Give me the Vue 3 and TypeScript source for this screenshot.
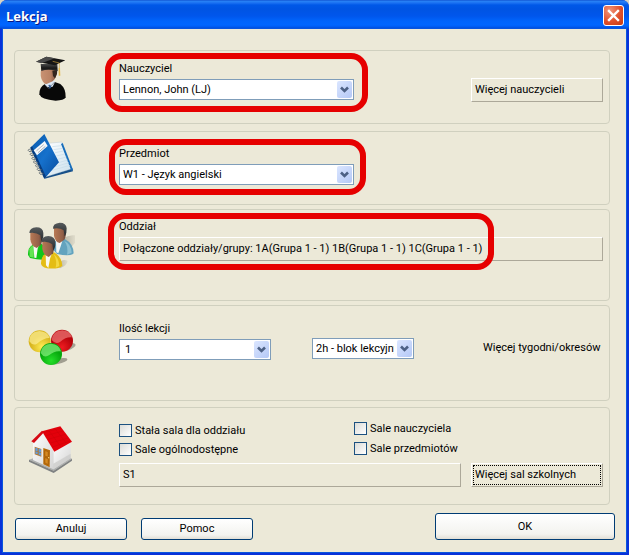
<script setup lang="ts">
import { ref } from 'vue'

const teacher = ref('Lennon, John (LJ)')
const subject = ref('W1 - Język angielski')
const count = ref('1')
const block = ref('2h - blok lekcyjny')

const leftRooms = ref([
  { id: 'room-fixed', text: 'Stała sala dla oddziału', on: false },
  { id: 'room-public', text: 'Sale ogólnodostępne', on: false },
])
const rightRooms = ref([
  { id: 'room-teacher', text: 'Sale nauczyciela', on: false },
  { id: 'room-subject', text: 'Sale przedmiotów', on: false },
])
</script>

<template>
  <main class="window">
    <header class="titlebar">
      <h1>Lekcja</h1>
      <button class="close" type="button" aria-label="Zamknij">
        <svg viewBox="0 0 21 21" width="21" height="21">
          <path d="M6 6l9 9M15 6l-9 9" stroke="#fff" stroke-width="2.4" stroke-linecap="square" />
        </svg>
      </button>
    </header>

    <form class="content" @submit.prevent>
      <section class="group teacher">
        <svg class="icon" viewBox="0 3 210 180" aria-hidden="true">
          <defs>
            <linearGradient id="cap" x1="0" y1="0" x2="0" y2="1">
              <stop offset="0" stop-color="#4a4a4a" /><stop offset=".6" stop-color="#181818" /><stop offset="1" stop-color="#333" />
            </linearGradient>
            <linearGradient id="face" x1="0" y1="0" x2="1" y2="0">
              <stop offset="0" stop-color="#c99373" /><stop offset=".6" stop-color="#b98264" /><stop offset="1" stop-color="#7c5340" />
            </linearGradient>
          </defs>
          <path d="M58 133Q58 110 75 102L98 94L121 102Q138 116 137 142Q132 152 107 152Q63 149 58 133Z" fill="#080808" />
          <path d="M74 103L82 112L98 110L106 94L94 92Z" fill="#dce8f5" />
          <path d="M75 105L86 115L104 96" fill="none" stroke="#59616b" stroke-width="2" />
          <path d="M85 105l6-1 3 8-5 5z" fill="#395e92" />
          <path d="M64 54Q58 82 69 95Q74 103 80 102L98 94Q111 85 111 58Z" fill="url(#face)" />
          <path d="M97 62L112 59Q113 74 105 85L99 78Z" fill="#33261f" />
          <path d="M62 42L112 42L113 63Q84 55 64 63Z" fill="url(#cap)" />
          <path d="M48 35L79 20L136 31L105 46Z" fill="#151515" />
          <path d="M48 35L79 20L105 25L64 40Z" fill="#4b4b4b" />
          <path d="M98 34L118 39L118 68" fill="none" stroke="#c69a3b" stroke-width="2" />
          <path d="M116 54h4l1 23h-5z" fill="#e5b94e" />
        </svg>
        <div class="main">
          <div class="field wide">
            <label for="teacher">Nauczyciel</label>
            <div class="combo">
              <select id="teacher" v-model="teacher"><option>Lennon, John (LJ)</option></select>
              <span class="arrow"><svg viewBox="0 0 15 17"><path d="M4 6.5l3.5 3.5L11 6.5" /></svg></span>
            </div>
            <span class="mark" />
          </div>
        </div>
        <button class="flat more" type="button">Więcej nauczycieli</button>
      </section>

      <section class="group subject">
        <svg class="icon" viewBox="0 6 210 180" aria-hidden="true">
          <defs>
            <linearGradient id="cover" x1="0" y1="0" x2="1" y2="1">
              <stop offset="0" stop-color="#0959aa" /><stop offset=".5" stop-color="#1671cc" /><stop offset="1" stop-color="#074b9c" />
            </linearGradient>
            <linearGradient id="pages" x1="0" y1="0" x2="1" y2="1">
              <stop offset="0" stop-color="#fff" /><stop offset="1" stop-color="#c9dfec" />
            </linearGradient>
          </defs>
          <path d="M74 146L159 124L157 115L85 120Z" fill="#174f88" />
          <path d="M84 40L126 36L156 116L76 141L100 98Z" fill="url(#pages)" stroke="#a3b9c5" />
          <path d="M128 39L159 119L154 122L123 42Z" fill="#176dbb" />
          <path d="M97 50l27-3M101 59l27-4M105 68l26-5M109 78l26-6M113 88l26-7M115 98l28-8M106 110l41-12M96 121l54-15" stroke="#c6dce8" stroke-width="2" />
          <path d="M31 53L73 12L117 97L73 146Z" fill="url(#cover)" />
          <path d="M31 53L36 49L78 140L73 146Z" fill="#083c7e" />
          <path d="M41 61L74 33L83 48L51 76Z" fill="#f6f8fa" />
          <path d="M50 62L71 44M54 68L76 49" stroke="#8c99a7" stroke-width="3" stroke-dasharray="3 1" />
          <g fill="none" stroke="#6d767b" stroke-width="3">
            <path d="M35 63c-5-8-12-5-10-1s8 4 12 0M41 75c-5-8-12-5-10-1s8 4 12 0M46 87c-5-8-12-5-10-1s8 4 12 0M51 98c-5-8-12-5-10-1s8 4 12 0M57 109c-5-8-12-5-10-1s8 4 12 0M62 120c-5-8-12-5-10-1s8 4 12 0M68 131c-5-8-12-5-10-1s8 4 12 0" />
          </g>
        </svg>
        <div class="main">
          <div class="field wide">
            <label for="subject">Przedmiot</label>
            <div class="combo">
              <select id="subject" v-model="subject"><option>W1 - Język angielski</option></select>
              <span class="arrow"><svg viewBox="0 0 15 17"><path d="M4 6.5l3.5 3.5L11 6.5" /></svg></span>
            </div>
            <span class="mark" />
          </div>
        </div>
      </section>

      <section class="group classes">
        <svg class="icon" viewBox="0 0 210 180" aria-hidden="true">
          <defs>
            <linearGradient id="skin" x1="0" y1="0" x2="1" y2="0">
              <stop offset="0" stop-color="#b87955" /><stop offset=".7" stop-color="#936048" /><stop offset="1" stop-color="#644336" />
            </linearGradient>
            <linearGradient id="hair" x1="0" y1="0" x2="0" y2="1">
              <stop offset="0" stop-color="#575b5d" /><stop offset="1" stop-color="#24282b" />
            </linearGradient>
            <linearGradient id="shade"><stop offset="0" stop-color="#8f8c7e" /><stop offset="1" stop-color="#d8d4c3" /></linearGradient>
          </defs>
          <path d="M128 62Q146 49 165 52L165 74L145 99Z" fill="url(#shade)" opacity=".6" />
          <path d="M112 143Q127 118 143 129Q141 143 120 151Z" fill="url(#shade)" opacity=".6" />
          <path d="M98 93Q98 73 110 67L134 63Q160 76 161 106Q151 117 111 108Z" fill="#63a3be" />
          <path d="M133 69Q153 77 155 104L141 110Q146 86 133 69Z" fill="#8bc0d2" />
          <path d="M108 69L128 65L122 85L115 106L109 103Z" fill="#f5f8f8" />
          <path d="M102 29L137 29Q140 53 133 65L119 75Q105 71 102 53Z" fill="url(#skin)" />
          <path d="M99 32Q98 16 119 14Q139 14 140 31Q141 46 134 55L131 37Q118 28 99 32Z" fill="url(#hair)" />
          <path d="M24 111Q23 89 38 80L64 77Q86 90 88 121Q71 130 30 120Z" fill="#12c51a" />
          <path d="M28 94Q34 82 42 80L41 119L29 116Z" fill="#64e453" />
          <path d="M40 80L58 79L53 92L49 120L43 119Z" fill="#f7f8f2" />
          <path d="M31 43L66 43Q69 66 63 80L50 90Q33 85 31 64Z" fill="url(#skin)" />
          <path d="M28 45Q28 30 49 28Q69 28 70 45Q71 61 64 70L61 52Q48 42 28 45Z" fill="url(#hair)" />
          <path d="M63 136Q64 114 76 108L102 103Q126 116 127 144Q116 154 81 151Q63 147 63 136Z" fill="#e4bd15" />
          <path d="M101 108Q117 120 118 144L107 149Q112 127 101 108Z" fill="#f3d942" />
          <path d="M77 108L96 105L90 122L85 150L78 142Z" fill="#faf9ef" />
          <path d="M67 70L102 70Q104 93 99 106L86 117Q70 112 67 92Z" fill="url(#skin)" />
          <path d="M64 72Q64 56 85 54Q105 55 106 72Q107 89 100 97L97 79Q85 68 64 72Z" fill="url(#hair)" />
        </svg>
        <div class="main">
          <div class="field">
            <label for="classes">Oddział</label>
            <button id="classes" class="flat" type="button">Połączone oddziały/grupy: 1A(Grupa 1 - 1) 1B(Grupa 1 - 1) 1C(Grupa 1 - 1)</button>
            <span class="mark" />
          </div>
        </div>
      </section>

      <section class="group lessons">
        <svg class="icon" viewBox="0 0 210 180" aria-hidden="true">
          <defs>
            <radialGradient id="yellow" cx=".6" cy=".75"><stop offset="0" stop-color="#ffec55" /><stop offset="1" stop-color="#d8b51d" /></radialGradient>
            <radialGradient id="red" cx=".5" cy=".8"><stop offset="0" stop-color="#ef1c20" /><stop offset="1" stop-color="#b7040b" /></radialGradient>
            <radialGradient id="green" cx=".5" cy=".8"><stop offset="0" stop-color="#25df29" /><stop offset="1" stop-color="#07a70d" /></radialGradient>
          </defs>
          <ellipse cx="140" cy="88" rx="28" ry="10" fill="#a6a394" transform="rotate(-18 140 88)" />
          <ellipse cx="112" cy="130" rx="31" ry="8" fill="#a19e90" transform="rotate(-12 112 130)" />
          <circle cx="59" cy="70" r="33" fill="url(#yellow)" />
          <path d="M28 70Q27 42 58 39Q83 41 89 60Q69 60 51 77Q38 85 28 70Z" fill="#fff3a0" opacity=".65" />
          <circle cx="126" cy="68" r="33" fill="url(#red)" />
          <path d="M95 66Q98 39 127 37Q151 39 156 58Q138 56 121 71Q107 81 95 66Z" fill="#f68d8b" opacity=".6" />
          <circle cx="93" cy="108" r="33" fill="url(#green)" />
          <path d="M62 105Q65 79 93 77Q118 79 123 100Q104 97 88 111Q73 122 62 105Z" fill="#93f58b" opacity=".65" />
        </svg>
        <div class="main lesson-row">
          <div class="field count">
            <label for="count">Ilość lekcji</label>
            <div class="combo">
              <select id="count" v-model="count"><option>1</option></select>
              <span class="arrow"><svg viewBox="0 0 15 17"><path d="M4 6.5l3.5 3.5L11 6.5" /></svg></span>
            </div>
          </div>
          <div class="combo block">
            <select v-model="block" aria-label="Blok"><option>2h - blok lekcyjny</option></select>
            <span class="arrow"><svg viewBox="0 0 15 17"><path d="M4 6.5l3.5 3.5L11 6.5" /></svg></span>
          </div>
        </div>
        <button class="plain" type="button">Więcej tygodni/okresów</button>
      </section>

      <section class="group rooms">
        <svg class="icon" viewBox="0 0 210 180" aria-hidden="true">
          <defs>
            <linearGradient id="wall" x1="0" y1="0" x2="1" y2="1"><stop offset="0" stop-color="#fff" /><stop offset="1" stop-color="#d4d4d4" /></linearGradient>
          </defs>
          <path d="M27 125L99 99L156 122L101 158Z" fill="#aeb0b0" />
          <path d="M27 125L101 158L156 122L156 128L101 165L27 131Z" fill="#7f8283" />
          <path d="M39 70L66 43L101 96L100 154L39 126Z" fill="url(#wall)" />
          <path d="M100 96L152 65L152 121L100 154Z" fill="url(#wall)" />
          <path d="M100 137L152 107L152 121L100 154Z" fill="#c9c9c8" opacity=".7" />
          <path d="M66 40L121 25L156 71L103 101Z" fill="#e3000b" />
          <path d="M66 38L72 43L42 75L34 70Z" fill="#d60913" />
          <path d="M71 43L122 31M77 53L129 39M84 64L137 49M91 75L145 60M97 87L151 69M86 37L121 84M105 32L139 76" stroke="#c20007" stroke-width="1" />
          <path d="M44 86L64 93L64 116L44 109Z" fill="#b57529" />
          <path d="M46 89l7 2v9l-7-2zM56 92l7 2v9l-7-2zM46 100l7 2v7l-7-2zM56 103l7 2v8l-7-2z" fill="#629ddb" />
          <path d="M70 90L90 97L89 148L70 139Z" fill="#b76a08" />
          <path d="M75 98l9 3v16l-9-3zM75 119l9 3v17l-9-4z" fill="#d78a1f" stroke="#8b4b08" />
          <circle cx="86" cy="119" r="2" fill="#ffe07b" />
        </svg>
        <div class="main">
          <div class="checks">
            <div class="check-col left">
              <label v-for="room in leftRooms" :key="room.id" :for="room.id">
                <input :id="room.id" v-model="room.on" type="checkbox" />{{ room.text }}
              </label>
            </div>
            <div class="check-col right">
              <label v-for="room in rightRooms" :key="room.id" :for="room.id">
                <input :id="room.id" v-model="room.on" type="checkbox" />{{ room.text }}
              </label>
            </div>
          </div>
          <div class="room-row">
            <button class="flat" type="button">S1</button>
            <button class="flat focused" type="button">Więcej sal szkolnych</button>
          </div>
        </div>
      </section>

      <footer class="actions">
        <button class="push" type="button">Anuluj</button>
        <button class="push" type="button">Pomoc</button>
        <button class="push ok" type="submit">OK</button>
      </footer>
    </form>
  </main>
</template>

<style>
body {
  background: #d6d3c4;
}
</style>

<style scoped>
* {
  box-sizing: border-box;
}
.window {
  min-height: 100vh;
  display: flex;
  flex-direction: column;
  border-radius: 7px 7px 0 0;
  overflow: hidden;
  background: #0831d9;
  font-family: Roboto, 'DejaVu Sans Condensed', sans-serif;
  font-size: 11px;
  line-height: 16px;
  color: #000;
}
button,
select {
  font: inherit;
  color: inherit;
}
.titlebar {
  height: 29px;
  padding: 2px 5px 0 6px;
  display: flex;
  align-items: center;
  justify-content: space-between;
  background: linear-gradient(#0a46c8 0, #2a84f6 1px, #1a70f2 3px, #0058e8 5px, #0054e3 9px, #0056ec 16px, #0064fb 21px, #0066ff 25px, #005af0 27px, #0043c8 29px);
}
h1 {
  margin: 0;
  font: bold 13px/20px 'Open Sans', sans-serif;
  color: #fff;
  text-shadow: 1px 1px 0 #0a1883;
}
.close {
  width: 21px;
  height: 21px;
  padding: 0;
  display: flex;
  align-items: center;
  justify-content: center;
  border: 1px solid #fff;
  border-radius: 3px;
  background: radial-gradient(circle at 30% 25%, #f0957a, #e0502c 55%, #c63a10);
}
.close svg {
  flex: none;
}
.content {
  flex: 1;
  margin: 0 3px 3px;
  padding: 21px 16px 12px 11px;
  background: #ece9d8;
  box-shadow: 0 0 0 1px #0855dd;
}
.group {
  display: flex;
  align-items: flex-start;
  min-height: 74px;
  padding: 0 6px 0 5px;
  border: 1px solid #d0d0bf;
  border-radius: 4px;
}
.icon {
  flex: none;
  width: 70px;
  height: 60px;
  margin-right: 29px;
}
.main {
  flex: 1;
  min-width: 0;
}
.teacher .main {
  padding-top: 10px;
}
.subject {
  margin-top: 7px;
}
.subject .main {
  padding-top: 14px;
}
.classes {
  min-height: 92px;
  margin-top: 4px;
}
.classes .main {
  padding-top: 9px;
}
.classes .icon {
  margin-top: 8px;
}
.lessons {
  min-height: 96px;
  margin-top: 4px;
}
.lessons .icon {
  margin-top: 12px;
}
.rooms {
  min-height: 98px;
  margin-top: 6px;
}
.rooms .icon {
  margin-top: 10px;
}
.rooms .main {
  padding-top: 12px;
}
.field {
  position: relative;
  display: flex;
  flex-direction: column;
  gap: 2px;
}
.field label {
  align-self: flex-start;
}
.wide {
  max-width: 235px;
}
.combo {
  position: relative;
  height: 21px;
}
.combo select {
  appearance: none;
  display: block;
  width: 100%;
  height: 21px;
  padding: 0 19px 0 3px;
  border: 1px solid #7f9db9;
  border-radius: 0;
  background: #fff;
}
.combo #count {
  padding-left: 5px;
}
.arrow {
  position: absolute;
  top: 2px;
  right: 2px;
  width: 15px;
  height: 17px;
  border-radius: 2px;
  background: linear-gradient(135deg, #dbe6ff, #b4c8f6);
  pointer-events: none;
}
.arrow svg {
  display: block;
  width: 15px;
  height: 17px;
  fill: none;
  stroke: #4d6185;
  stroke-width: 2.6;
}
.mark {
  position: absolute;
  inset: -8px -14px -12px -14px;
  border: 6px solid #e60000;
  border-radius: 17px;
  pointer-events: none;
}
.subject .mark {
  inset: -7px -12px -10px -10px;
}
.classes .mark {
  inset: -6px 109px -9px -11px;
}
.flat {
  height: 24px;
  padding: 0 3px;
  border: 1px solid;
  border-color: #fff #aca899 #aca899 #fff;
  background: #ece9d8;
  text-align: left;
  white-space: nowrap;
}
.more {
  flex: none;
  width: 132px;
  margin-top: 27px;
}
.lesson-row {
  display: flex;
  align-items: flex-start;
  gap: 41px;
  padding-top: 15px;
}
.count {
  flex: 0 1 152px;
}
.block {
  flex: 0 1 102px;
  margin-top: 17px;
}
.plain {
  flex: none;
  width: 120px;
  margin-top: 34px;
  padding: 0;
  border: 0;
  background: none;
  text-align: left;
  white-space: nowrap;
}
.checks {
  display: grid;
  grid-template-columns: 235px 1fr;
}
.check-col {
  display: flex;
  flex-direction: column;
  align-items: flex-start;
}
.check-col.left {
  gap: 2px;
  padding-top: 2px;
}
.check-col.right {
  gap: 3px;
}
.check-col label {
  display: flex;
  align-items: center;
  gap: 3px;
  height: 17px;
}
.check-col input {
  appearance: none;
  width: 13px;
  height: 13px;
  margin: 0;
  border: 1px solid #1c5180;
  background: linear-gradient(135deg, #dcdcd7, #fff);
}
.check-col input:checked {
  background: #21a121;
}
.room-row {
  display: flex;
  gap: 10px;
  margin-top: 5px;
}
.room-row .flat {
  flex: 1;
}
.room-row .focused {
  flex: none;
  width: 132px;
  outline: 1px dotted #000;
  outline-offset: -3px;
}
.actions {
  display: flex;
  align-items: flex-end;
  gap: 14px;
  margin-top: 8px;
  padding-left: 1px;
}
.push {
  width: 112px;
  height: 22px;
  padding: 0;
  border: 1px solid #003c74;
  border-radius: 3px;
  background: linear-gradient(#fff, #f3f3ef 80%, #e2dfd6);
}
.ok {
  width: 180px;
  height: 27px;
  margin-left: auto;
  margin-right: -5px;
}
</style>
